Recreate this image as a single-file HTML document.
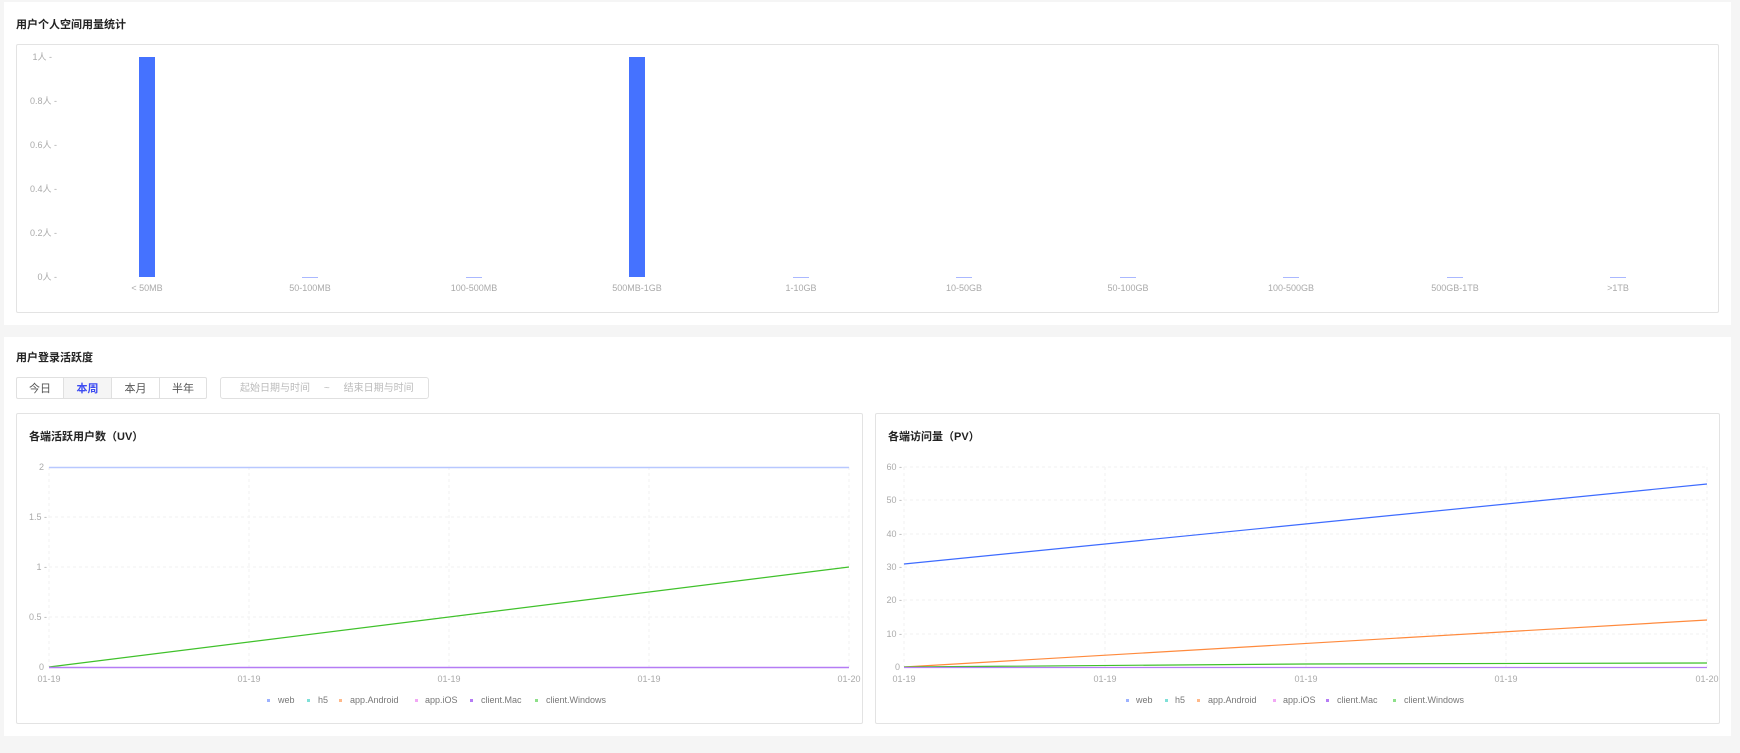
<!DOCTYPE html>
<html><head><meta charset="utf-8"><style>
body{margin:0;width:1740px;height:753px;background:#f5f5f5;font-family:"Liberation Sans","Noto Sans CJK SC",sans-serif;position:relative;overflow:hidden}
.card{position:absolute;background:#fff}
.t{position:absolute;font-size:11px;color:#222;font-weight:bold}
.box{position:absolute;border:1px solid #e3e3e3;background:#fff;border-radius:2px}
svg{position:absolute;left:0;top:0}
svg text{font-family:"Liberation Sans","Noto Sans CJK SC",sans-serif}
.btn{position:absolute;top:377px;height:22px;line-height:22px;font-size:11px;color:#555;text-align:center;border:1px solid #e0e0e0;background:#fff;box-sizing:border-box}
</style></head><body>
<div class="card" style="left:4px;top:2px;width:1727px;height:323px"></div>
<div class="t" style="left:16px;top:16px">用户个人空间用量统计</div>
<div class="box" style="left:16px;top:44px;width:1701px;height:267px"></div>

<div class="card" style="left:4px;top:337px;width:1727px;height:399px"></div>
<div class="t" style="left:16px;top:349px">用户登录活跃度</div>
<div class="btn" style="left:16px;width:48px;border-radius:2px 0 0 2px">今日</div>
<div class="btn" style="left:63px;width:49px;background:#f5f5f5;color:#3d4cf2;font-weight:bold">本周</div>
<div class="btn" style="left:111px;width:49px">本月</div>
<div class="btn" style="left:159px;width:48px;border-radius:0 2px 2px 0">半年</div>
<div class="btn" style="left:220px;width:209px;border-radius:3px;color:#bbb;font-size:10px;text-align:left;padding-left:19px">起始日期与时间 &nbsp;&nbsp;&nbsp;&nbsp;~&nbsp;&nbsp;&nbsp;&nbsp; 结束日期与时间</div>

<div class="box" style="left:16px;top:413px;width:845px;height:309px"></div>
<div class="box" style="left:875px;top:413px;width:843px;height:309px"></div>
<div class="t" style="left:29px;top:428px">各端活跃用户数（UV）</div>
<div class="t" style="left:888px;top:428px">各端访问量（PV）</div>

<svg width="1740" height="753" font-size="9" fill="#aaa">
<g text-anchor="end">
<text x="52" y="60">1人 -</text><text x="57" y="104">0.8人 -</text><text x="57" y="148">0.6人 -</text><text x="57" y="192">0.4人 -</text><text x="57" y="236">0.2人 -</text><text x="57" y="280">0人 -</text>
</g>
<rect x="139" y="57" width="16" height="220" fill="#4572ff"/>
<rect x="629" y="57" width="16" height="220" fill="#4572ff"/>
<g stroke="#aab8ff" stroke-width="1">
<line x1="302" y1="277.5" x2="318" y2="277.5"/><line x1="466" y1="277.5" x2="482" y2="277.5"/><line x1="793" y1="277.5" x2="809" y2="277.5"/><line x1="956" y1="277.5" x2="972" y2="277.5"/><line x1="1120" y1="277.5" x2="1136" y2="277.5"/><line x1="1283" y1="277.5" x2="1299" y2="277.5"/><line x1="1447" y1="277.5" x2="1463" y2="277.5"/><line x1="1610" y1="277.5" x2="1626" y2="277.5"/>
</g>
<g text-anchor="middle">
<text x="147" y="291">&lt; 50MB</text><text x="310" y="291">50-100MB</text><text x="474" y="291">100-500MB</text><text x="637" y="291">500MB-1GB</text><text x="801" y="291">1-10GB</text><text x="964" y="291">10-50GB</text><text x="1128" y="291">50-100GB</text><text x="1291" y="291">100-500GB</text><text x="1455" y="291">500GB-1TB</text><text x="1618" y="291">&gt;1TB</text>
</g>

<g stroke="#f2f2f2" stroke-dasharray="3,3">
<line x1="49" y1="517" x2="849" y2="517"/><line x1="49" y1="567" x2="849" y2="567"/><line x1="49" y1="617" x2="849" y2="617"/>
<line x1="49" y1="467" x2="49" y2="667"/><line x1="249" y1="467" x2="249" y2="667"/><line x1="449" y1="467" x2="449" y2="667"/><line x1="649" y1="467" x2="649" y2="667"/><line x1="849" y1="467" x2="849" y2="667"/>
</g>
<g text-anchor="end"><text x="44" y="470">2</text><text x="47" y="520">1.5 -</text><text x="47" y="570">1 -</text><text x="47" y="620">0.5 -</text><text x="44" y="670">0</text></g>
<line x1="49" y1="467.5" x2="849" y2="467.5" stroke="#b8c8ff" stroke-width="1.5"/>
<line x1="49" y1="667" x2="849" y2="567" stroke="#3fc12a" stroke-width="1.2"/>
<line x1="49" y1="667.5" x2="849" y2="667.5" stroke="#b57cf5" stroke-width="1.5"/>
<g text-anchor="middle"><text x="49" y="682">01-19</text><text x="249" y="682">01-19</text><text x="449" y="682">01-19</text><text x="649" y="682">01-19</text><text x="849" y="682">01-20</text></g>
<g font-size="9" fill="#777">
<rect x="267" y="699" width="3" height="3" fill="#9db2ff"/><text x="278" y="703">web</text>
<rect x="307" y="699" width="3" height="3" fill="#7fe0d8"/><text x="318" y="703">h5</text>
<rect x="339" y="699" width="3" height="3" fill="#ffb98a"/><text x="350" y="703">app.Android</text>
<rect x="415" y="699" width="3" height="3" fill="#f2a8f5"/><text x="425" y="703">app.iOS</text>
<rect x="470" y="699" width="3" height="3" fill="#b57cf5"/><text x="481" y="703">client.Mac</text>
<rect x="535" y="699" width="3" height="3" fill="#8ee08a"/><text x="546" y="703">client.Windows</text>
</g>

<g stroke="#f2f2f2" stroke-dasharray="3,3">
<line x1="904" y1="467" x2="1707" y2="467"/><line x1="904" y1="500" x2="1707" y2="500"/><line x1="904" y1="534" x2="1707" y2="534"/><line x1="904" y1="567" x2="1707" y2="567"/><line x1="904" y1="600" x2="1707" y2="600"/><line x1="904" y1="634" x2="1707" y2="634"/>
<line x1="904" y1="467" x2="904" y2="667"/><line x1="1105" y1="467" x2="1105" y2="667"/><line x1="1306" y1="467" x2="1306" y2="667"/><line x1="1506" y1="467" x2="1506" y2="667"/><line x1="1707" y1="467" x2="1707" y2="667"/>
</g>
<g text-anchor="end"><text x="902" y="470">60 -</text><text x="902" y="503">50 -</text><text x="902" y="537">40 -</text><text x="902" y="570">30 -</text><text x="902" y="603">20 -</text><text x="902" y="637">10 -</text><text x="900" y="670">0</text></g>
<line x1="904" y1="564" x2="1707" y2="484" stroke="#3d6bff" stroke-width="1.2"/>
<line x1="904" y1="667" x2="1707" y2="620" stroke="#ff8a3d" stroke-width="1.2"/>
<polyline points="904,667 1306,664 1707,663" fill="none" stroke="#3fc12a" stroke-width="1.2"/>
<line x1="904" y1="667.5" x2="1707" y2="667.5" stroke="#b57cf5" stroke-width="1.2"/>
<g text-anchor="middle"><text x="904" y="682">01-19</text><text x="1105" y="682">01-19</text><text x="1306" y="682">01-19</text><text x="1506" y="682">01-19</text><text x="1707" y="682">01-20</text></g>
<g font-size="9" fill="#777">
<rect x="1126" y="699" width="3" height="3" fill="#9db2ff"/><text x="1136" y="703">web</text>
<rect x="1165" y="699" width="3" height="3" fill="#7fe0d8"/><text x="1175" y="703">h5</text>
<rect x="1197" y="699" width="3" height="3" fill="#ffb98a"/><text x="1208" y="703">app.Android</text>
<rect x="1273" y="699" width="3" height="3" fill="#f2a8f5"/><text x="1283" y="703">app.iOS</text>
<rect x="1326" y="699" width="3" height="3" fill="#b57cf5"/><text x="1337" y="703">client.Mac</text>
<rect x="1393" y="699" width="3" height="3" fill="#8ee08a"/><text x="1404" y="703">client.Windows</text>
</g>
</svg>
</body></html>
